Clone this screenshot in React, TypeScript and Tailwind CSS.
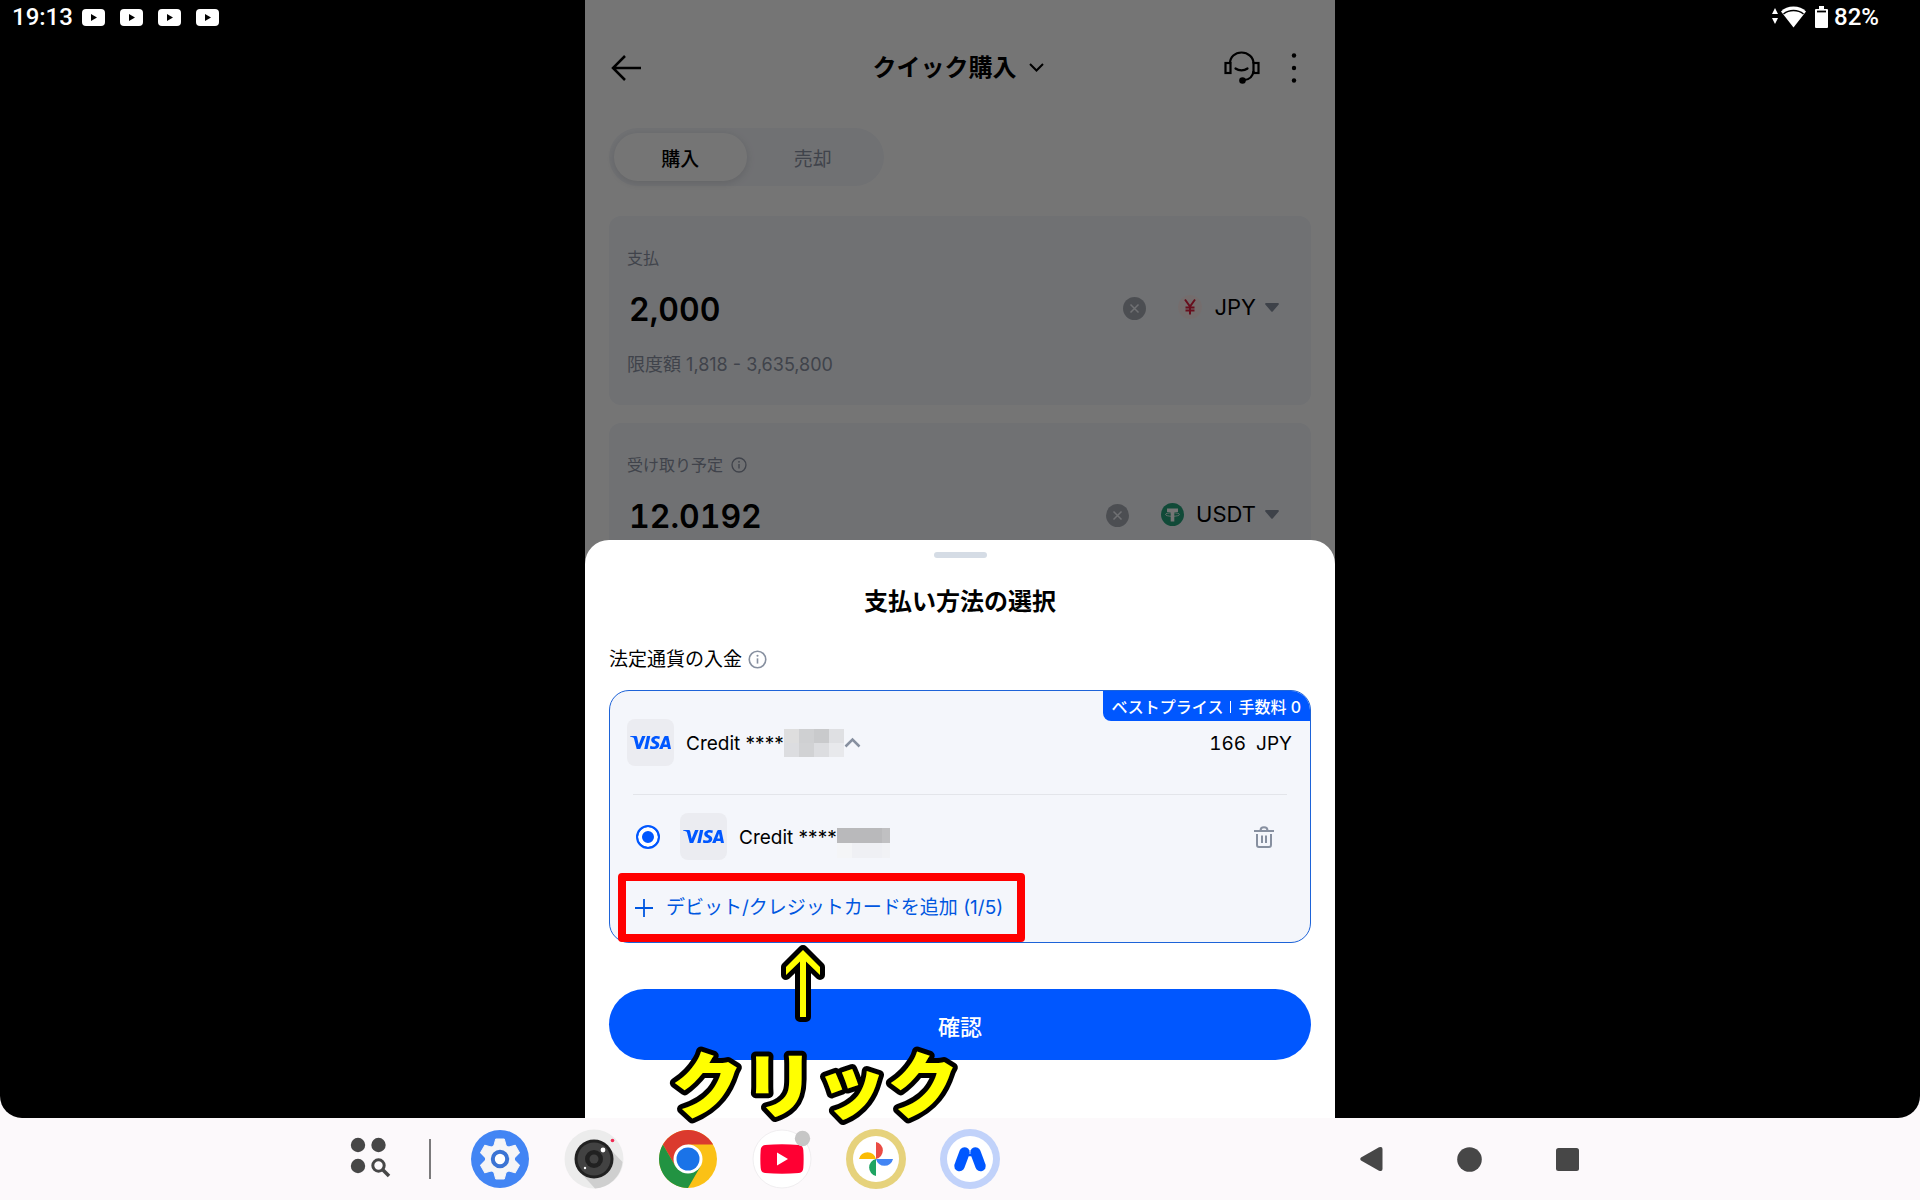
import { ReactNode } from "react";
import { SiVisa } from "react-icons/si";

/* ---------- small icons ---------- */

function YoutubeGlyph() {
  return (
    <svg width="23" height="17" viewBox="0 0 23 17">
      <rect width="23" height="17" rx="4" fill="#fff" />
      <path d="M9 5l6 3.5L9 12z" fill="#000" />
    </svg>
  );
}

function WifiIcon() {
  return (
    <svg width="34" height="22" viewBox="0 0 34 22" fill="#fff">
      <path d="M3 2l3 6H0zM3 18l3-6H0z" />
      <path d="M9 5.5C12 2.200 16.500.5 21.500.5S31 2.200 34 5.500L21.500 21.500z" />
      <path
        d="M11.500 6.800c2.800-2.300 6.200-3.500 10-3.500s7.200 1.200 10 3.500"
        fill="none"
        stroke="#000"
        strokeWidth="1.500"
        transform="translate(0 1.200)"
      />
    </svg>
  );
}

function BatteryIcon() {
  return (
    <svg width="13" height="22" viewBox="0 0 13 22">
      <path d="M4 0h5v3h3a1 1 0 011 1v17a1 1 0 01-1 1H1a1 1 0 01-1-1V4a1 1 0 011-1h3z" fill="#fff" />
      <path d="M2 5.500h9" stroke="#000" strokeWidth="1.800" />
    </svg>
  );
}

function InfoIcon({ size }: { size: number }) {
  return (
    <svg width={size} height={size} viewBox="0 0 20 20" fill="none" stroke="currentColor">
      <circle cx="10" cy="10" r="8.700" strokeWidth="1.700" />
      <path d="M10 8.800v5.500" strokeWidth="1.700" />
      <circle cx="10" cy="6" r="1.100" fill="currentColor" stroke="none" />
    </svg>
  );
}

function HeadsetIcon() {
  return (
    <svg width="36" height="34" viewBox="0 0 36 34" fill="none" stroke="#000" strokeWidth="2.200">
      <path d="M6 12.500C6 6 11 1.500 17.500 1.500S29.500 6 29.500 12.500" />
      <rect x="1.500" y="12" width="5" height="10" />
      <rect x="29.500" y="12" width="5" height="10" />
      <path d="M11.500 17.500c3.500 2.600 8.500 2.600 12 0" strokeLinecap="round" />
      <path d="M29.500 20c-.5 5-4 8.700-10 9.200" />
      <circle cx="18.500" cy="29.500" r="3.300" fill="#000" stroke="none" />
    </svg>
  );
}

function ClearButton({ label }: { label: string }) {
  return (
    <button aria-label={label}>
      <svg width="23" height="23" viewBox="0 0 23 23">
        <circle cx="11.500" cy="11.500" r="11.500" fill="#a6abb4" />
        <path d="M7.500 7.500l8 8m0-8l-8 8" stroke="#f4f6fb" strokeWidth="1.500" />
      </svg>
    </button>
  );
}

function Caret() {
  return (
    <svg width="14" height="9" viewBox="0 0 14 9">
      <path d="M1 0h12a1 1 0 01.7 1.600L7.700 8.500a1 1 0 01-1.400 0L.3 1.600A1 1 0 011 0z" fill="#8790a0" />
    </svg>
  );
}

function YenIcon() {
  return (
    <svg width="24" height="24" viewBox="0 0 24 24">
      <circle cx="12" cy="12" r="12" fill="#fdeeee" />
      <path
        d="M7 4.500L12 11.500 17 4.500M12 11.500V19.500M7.500 12.500h9M7.500 15.500h9"
        fill="none"
        stroke="#e0203f"
        strokeWidth="2"
      />
    </svg>
  );
}

function TetherIcon() {
  return (
    <svg width="23" height="23" viewBox="0 0 23 23">
      <circle cx="11.500" cy="11.500" r="11.500" fill="#26a17b" />
      <path d="M6 5.500h11V9h-3.700v9.500H9.700V9H6z" fill="#fff" />
      <ellipse cx="11.500" cy="11.500" rx="7" ry="1.800" fill="none" stroke="#fff" strokeWidth=".8" />
    </svg>
  );
}

function VisaTile() {
  return (
    <span className="flex size-[47px] shrink-0 items-center justify-center rounded-lg bg-[#ebecf1] text-[#0057ff]">
      <SiVisa size={41} />
    </span>
  );
}

/* ---------- launcher icons ---------- */

function SettingsApp() {
  return (
    <svg width="60" height="60" viewBox="-30 -30 60 60">
      <circle r="29" fill="#4285f4" />
      <g fill="#f5f5f7">
        <circle r="15" />
        {[0, 60, 120, 180, 240, 300].map((a) => (
          <path key={a} d="M-6.500-12l2.200-8h8.600l2.200 8z" transform={`rotate(${a})`} strokeLinejoin="round" stroke="#f5f5f7" />
        ))}
      </g>
      <circle r="7.200" fill="#fff" stroke="#3b74d4" strokeWidth="4" />
    </svg>
  );
}

function CameraApp() {
  return (
    <svg width="60" height="60" viewBox="-30 -30 60 60">
      <circle r="29.500" fill="#ececec" />
      <path d="M-14 13L1 29.500A29.500 29.500 0 0028.500 3L16-10z" fill="#cfcfcf" />
      <circle r="19.500" fill="#212121" />
      <circle r="16.500" fill="#424242" />
      <circle r="9" fill="#212121" />
      <circle r="4.500" fill="#424242" />
      <circle cx="9" cy="-9" r="2.400" fill="#fff" />
      <circle cx="-9" cy="9" r="1.200" fill="#fff" />
      <circle cx="18.500" cy="-18.500" r="1.800" fill="#f02a52" />
    </svg>
  );
}

function ChromeApp() {
  return (
    <svg width="60" height="60" viewBox="-30 -30 60 60">
      <circle r="29" fill="#fbc116" />
      <path d="M-25.100-14.500A29 29 0 0125.100-14.500H0L-12.600 7.200z" fill="#db3a2e" />
      <path d="M-25.100-14.500A29 29 0 000 29L12.600 7.200-12.600 7.200z" fill="#229342" />
      <circle r="14.500" fill="#fff" />
      <circle r="11.500" fill="#1a73e8" />
    </svg>
  );
}

function YoutubeApp() {
  return (
    <svg width="60" height="60" viewBox="-30 -30 60 60" className="overflow-visible">
      <circle r="29" fill="#fff" stroke="#f0eef0" />
      <path
        d="M-17-14Q0-15.500 17-14Q21-13.500 21.300-9Q22 0 21.300 9Q21 13.500 17 14Q0 15.500-17 14Q-21 13.500-21.300 9Q-22 0-21.300-9Q-21-13.500-17-14z"
        fill="#ff0033"
      />
      <path d="M-5-6.500L6 0-5 6.500z" fill="#fff" />
      <circle cx="20.500" cy="-20.500" r="7.700" fill="#c6c6c6" />
    </svg>
  );
}

function PhotosApp() {
  return (
    <svg width="60" height="60" viewBox="-30 -30 60 60">
      <circle r="30" fill="#e6d27c" />
      <circle r="23" fill="#fff" />
      <path d="M0 0V-17A8.700 8.700 0 010 0z" fill="#ea4c44" />
      <path d="M0 0H17A8.700 8.700 0 010 0z" fill="#4285f4" />
      <path d="M0 0V17A8.700 8.700 0 010 0z" fill="#1fa463" />
      <path d="M0 0H-17A8.700 8.700 0 010 0z" fill="#fbbc04" />
    </svg>
  );
}

function WalletApp() {
  return (
    <svg width="60" height="60" viewBox="-30 -30 60 60">
      <circle r="30" fill="#c1d2fa" />
      <circle r="23" fill="#fff" />
      <g stroke="#0057ff" strokeLinecap="round" strokeWidth="10.500">
        <path d="M-5.500-6.500L-10.500 7" />
        <path d="M5.500-6.500L10.500 7" />
        <path d="M-4-4h8" strokeWidth="2.500" />
      </g>
    </svg>
  );
}

function AppDrawerIcon() {
  return (
    <svg width="40" height="40" viewBox="0 0 40 40" fill="#474747" className="overflow-visible">
      <circle cx="8" cy="6" r="7.200" />
      <circle cx="28.500" cy="6" r="7.200" />
      <circle cx="8" cy="27" r="7.200" />
      <circle cx="28.500" cy="26.500" r="5.700" fill="none" stroke="#474747" strokeWidth="3" />
      <path d="M32.500 30.500l6.500 6.500" stroke="#474747" strokeWidth="3.500" />
    </svg>
  );
}

const apps = [
  { name: "設定", icon: <SettingsApp /> },
  { name: "カメラ", icon: <CameraApp /> },
  { name: "Chrome", icon: <ChromeApp /> },
  { name: "YouTube", icon: <YoutubeApp /> },
  { name: "フォト", icon: <PhotosApp /> },
  { name: "ウォレット", icon: <WalletApp /> },
];

/* ---------- screen behind the sheet ---------- */

interface AmountCardProps {
  id: string;
  label: string;
  info?: boolean;
  value: string;
  currency: string;
  icon: ReactNode;
  note?: string;
}

function AmountCard({ id, label, info, value, currency, icon, note }: AmountCardProps) {
  return (
    <div className="flex h-[189px] flex-col rounded-xl bg-[#f4f6fb] px-[18px] pt-[30px]">
      <div className="flex items-center gap-2 text-[16px] leading-6 text-[#8c93a3]">
        <label htmlFor={id}>{label}</label>
        {info && <InfoIcon size={16} />}
      </div>
      <div className="mt-[14px] flex h-12 items-center pr-[14px]">
        <input
          id={id}
          defaultValue={value}
          className="h-12 w-full min-w-0 flex-1 bg-transparent pl-[2px] pt-1 text-[32px] font-semibold tabular-nums text-black outline-none"
        />
        <ClearButton label={`${label}をクリア`} />
        <button className="ml-8 flex items-center pb-[2px] text-[22px] leading-7 text-black">
          {icon}
          <span className="ml-3 mr-[9px]">{currency}</span>
          <Caret />
        </button>
      </div>
      {note && <p className="mt-[21px] text-[18px] leading-6 text-[#8c93a3]">{note}</p>}
    </div>
  );
}

function QuickBuy() {
  return (
    <div className="px-6">
      <header className="flex h-32 items-center justify-between pt-[7px]">
        <button aria-label="戻る" className="flex w-[86px] pl-[2px]">
          <svg width="30" height="26" viewBox="0 0 30 26" fill="none" stroke="#000" strokeWidth="2.500">
            <path d="M14 1L2 13l12 12M2 13h28" />
          </svg>
        </button>
        <button className="flex items-center gap-3 text-[24px] font-bold leading-9">
          クイック購入
          <svg width="15" height="9" viewBox="0 0 15 9" fill="none" stroke="#000" strokeWidth="2">
            <path d="M1 1l6.500 6.500L14 1" />
          </svg>
        </button>
        <div className="flex w-[90px] items-center justify-end gap-[31px] pr-[14px]">
          <button aria-label="サポート">
            <HeadsetIcon />
          </button>
          <button aria-label="メニュー">
            <svg width="6" height="30" viewBox="0 0 6 30">
              <circle cx="3" cy="2.500" r="2.200" />
              <circle cx="3" cy="15" r="2.200" />
              <circle cx="3" cy="27.500" r="2.200" />
            </svg>
          </button>
        </div>
      </header>

      <div className="flex h-[58px] w-[275px] rounded-full bg-[#f4f6fb] p-[5px] text-[19px]">
        <button className="flex-1 rounded-full bg-white pt-[6px] font-medium shadow-[0_2px_10px_rgba(0,0,0,0.12)]">
          購入
        </button>
        <button className="flex-1 pt-[6px] text-[#8c93a3]">売却</button>
      </div>

      <div className="mt-[30px] flex flex-col gap-[18px]">
        <AmountCard id="pay" label="支払" value="2,000" currency="JPY" icon={<YenIcon />} note="限度額 1,818 - 3,635,800" />
        <AmountCard id="receive" label="受け取り予定" info value="12.0192" currency="USDT" icon={<TetherIcon />} />
      </div>
    </div>
  );
}

/* ---------- bottom sheet ---------- */

// blurred-out card digits
function Mosaic({ cells, cell, short }: { cells: string[]; cell: string; short?: boolean }) {
  return (
    <span className={short ? "grid grid-cols-[15px_15px_15px_8px] pt-3" : "grid grid-cols-4"}>
      {cells.map((c, i) => (
        <span key={i} className={cell} style={{ backgroundColor: c }} />
      ))}
    </span>
  );
}

function PaymentSheet() {
  return (
    <section className="absolute inset-x-0 bottom-0 rounded-t-3xl bg-white px-6 pb-[58px] pt-3">
      <div className="mx-auto h-[6px] w-[53px] rounded-full bg-[#d5dce5]" />
      <h1 className="mt-[26px] text-center text-[24px] font-bold leading-9">支払い方法の選択</h1>
      <div className="mt-6 flex items-center gap-[6px] text-[19px] leading-7">
        <h2 className="pt-[2px]">法定通貨の入金</h2>
        <span className="text-[#8790a0]">
          <InfoIcon size={19} />
        </span>
      </div>

      <div className="relative mt-4 rounded-[20px] border border-[#1d63d8] bg-[#f4f6fb] pt-7">
        <div className="absolute right-0 top-0 flex h-[30px] items-center gap-[7px] rounded-bl-lg rounded-tr-[19px] bg-[#0057ff] px-[9px] pt-[2px] text-[16px] font-medium text-white">
          ベストプライス
          <span className="h-3 w-px bg-white" />
          手数料 0
        </div>

        <div className="flex items-center pl-[17px] pr-[18px] text-[19px]">
          <VisaTile />
          <span className="ml-3 pt-[3px]">Credit ****</span>
          <Mosaic
            cells={["#dedede", "#cfd0d2", "#c9cacc", "#dfe0e3", "#dcdde0", "#d1d2d4", "#dcdde0", "#e8e9ec"]}
            cell="h-[14px] w-[15px]"
          />
          <button aria-label="閉じる">
            <svg width="17" height="11" viewBox="0 0 17 11" fill="none" stroke="#8790a0" strokeWidth="2.500">
              <path d="M1.500 9.500l7-7 7 7" />
            </svg>
          </button>
          <span className="ml-auto flex gap-[10px] pt-[3px] tabular-nums">
            <span>166</span>
            <span>JPY</span>
          </span>
        </div>

        <div className="mx-[23px] mt-7 h-px bg-[#e3e5ea]" />

        <div className="mt-[18px] flex items-center pl-[26px] pr-[36px] text-[19px]">
          <input
            id="card"
            type="radio"
            name="method"
            defaultChecked
            className="size-6 appearance-none rounded-full border-2 border-[#0057ff] bg-[#0057ff] shadow-[inset_0_0_0_4px_#fff]"
          />
          <label htmlFor="card" className="ml-5 flex items-center">
            <VisaTile />
            <span className="ml-3 pt-[3px]">Credit ****</span>
            <Mosaic
              short
              cells={["#b9b9bb", "#b9b9bb", "#b9b9bb", "#c0c0c2", "#f4f5f7", "#eff0f4", "#eff0f4", "#f1f2f5"]}
              cell="h-[15px]"
            />
          </label>
          <button aria-label="カードを削除" className="ml-auto">
            <svg width="20" height="22" viewBox="0 0 20 22" fill="none" stroke="#8790a0" strokeWidth="2">
              <path d="M0 5h20M6.500 4.500c0-4.500 7-4.500 7 0M3 8v11a2 2 0 002 2h10a2 2 0 002-2V8M8 9.500V17M12 9.500V17" />
            </svg>
          </button>
        </div>

        <button className="relative ml-2 mt-[13px] flex h-[69px] items-center pl-[17px] pr-[22px] text-[19px] text-[#0057e0]">
          <svg width="18" height="18" viewBox="0 0 18 18" stroke="#0057e0" strokeWidth="1.800">
            <path d="M0 9h18M9 0v18" />
          </svg>
          <span className="ml-[13px] pt-[2px]">デビット/クレジットカードを追加 (1/5)</span>
          <span className="absolute inset-0 rounded-[4px] border-8 border-[#ff0000]" />
        </button>
      </div>

      <button className="mt-[46px] h-[71px] w-full rounded-full bg-[#0057ff] pt-[6px] text-[22px] font-medium text-white">
        確認
      </button>

      {/* hand-drawn hint */}
      <svg
        className="pointer-events-none absolute left-[86px] top-[404px] overflow-visible"
        width="290"
        height="180"
        viewBox="0 0 290 180"
        fill="#ff0"
        stroke="#000"
        strokeWidth="10"
        strokeLinejoin="round"
        paintOrder="stroke"
      >
        <path d="M132 6L149 23V31L135 17.500V73H129V17.500L115 31V23z" />
        <text x="0" y="168" className="text-[72px] font-black">
          クリック
        </text>
      </svg>
    </section>
  );
}

export default function App() {
  return (
    <div className="flex min-h-screen flex-col bg-[#fcf9fb] font-['Inter','Noto_Sans_CJK_JP',sans-serif] text-black">
      <main className="grid flex-1 grid-cols-[1fr_minmax(0,750px)_1fr] rounded-b-[22px] bg-black">
        <div className="flex h-[34px] items-center pl-3 font-['Roboto',sans-serif] text-[24px] font-medium leading-none text-white">
          19:13
          <div className="ml-[9px] flex gap-[15px]">
            <YoutubeGlyph />
            <YoutubeGlyph />
            <YoutubeGlyph />
            <YoutubeGlyph />
          </div>
        </div>

        <div className="relative bg-white">
          <QuickBuy />
          <div className="absolute inset-0 bg-black/54" />
          <PaymentSheet />
        </div>

        <div className="flex h-[34px] items-center justify-end pr-[41px] font-['Roboto',sans-serif] text-[24px] font-medium leading-none text-white">
          <WifiIcon />
          <span className="ml-[9px] mr-[6px]">
            <BatteryIcon />
          </span>
          82%
        </div>
      </main>

      <nav className="flex h-[82px] items-center justify-between pl-[350px] pr-[341px]">
        <div className="flex items-center">
          <button aria-label="アプリ一覧">
            <AppDrawerIcon />
          </button>
          <span className="ml-[39px] mr-[39px] h-10 w-[2px] bg-[#7b7a7b]" />
          <div className="flex gap-[34px]">
            {apps.map((app) => (
              <button key={app.name} aria-label={app.name}>
                {app.icon}
              </button>
            ))}
          </div>
        </div>

        <div className="flex items-center gap-[74px]">
          <button aria-label="戻る">
            <svg width="23" height="26" viewBox="0 0 23 26" fill="#474747">
              <path d="M1 11.500L19 1.300Q22.500 0 22.500 3V23Q22.500 26 19 24.700L1 14.500Q-.5 13 1 11.500z" />
            </svg>
          </button>
          <button aria-label="ホーム">
            <svg width="25" height="25" viewBox="0 0 25 25" fill="#474747">
              <circle cx="12.500" cy="12.500" r="12.300" />
            </svg>
          </button>
          <button aria-label="履歴">
            <svg width="23" height="23" viewBox="0 0 23 23" fill="#474747">
              <rect width="23" height="23" rx="2.500" />
            </svg>
          </button>
        </div>
      </nav>
    </div>
  );
}
